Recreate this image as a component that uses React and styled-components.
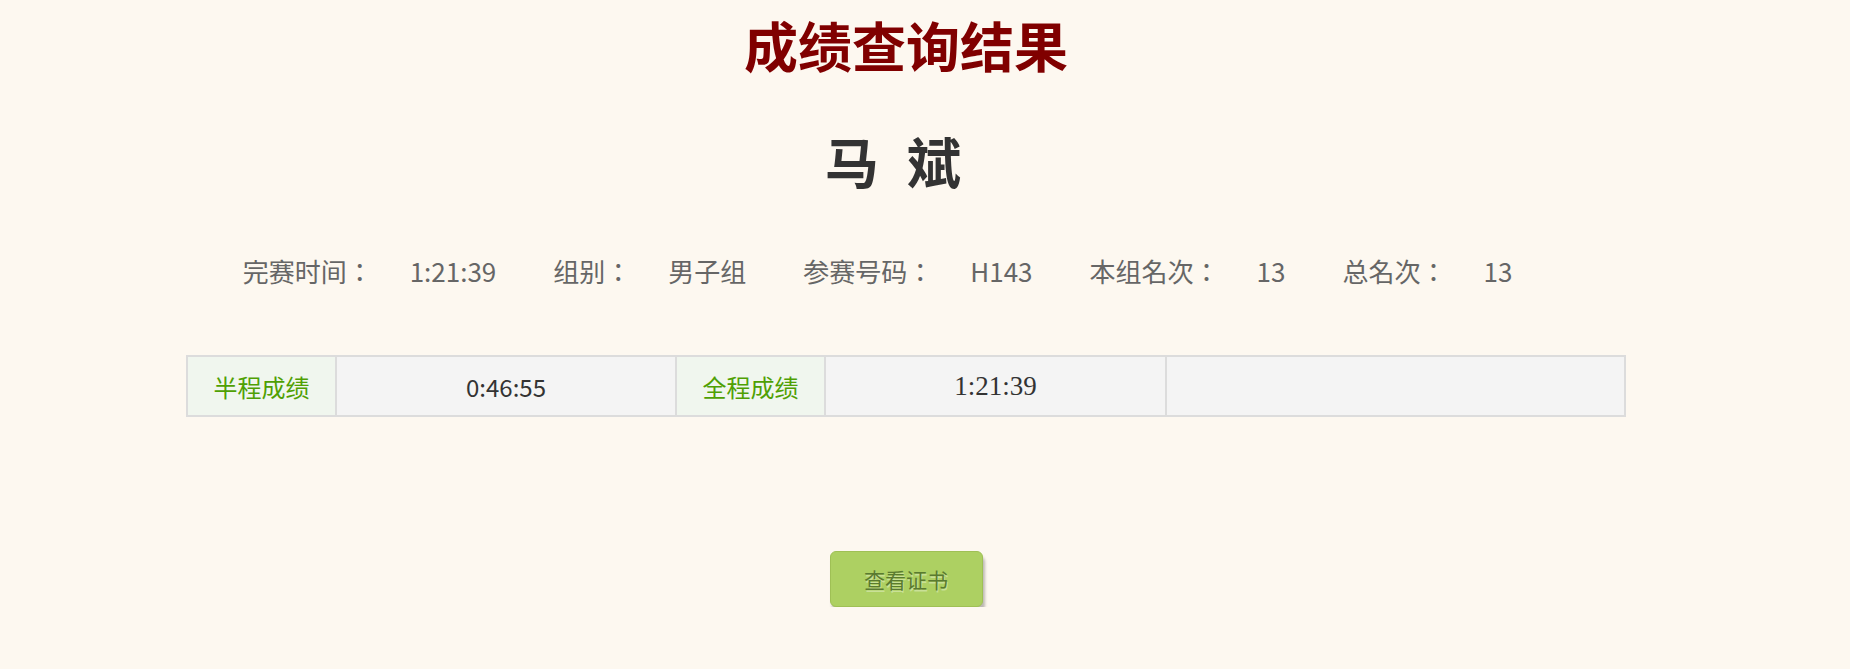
import React from 'react';
import styled, { createGlobalStyle } from 'styled-components';

const GlobalStyle = createGlobalStyle`
	html, body {
		margin: 0;
		padding: 0;
		background: #fdf8f0;
		font-family: 'Noto Sans CJK SC', 'Noto Sans', sans-serif;
	}
`;

const info = [
	{ label: '完赛时间：', value: '1:21:39' },
	{ label: '组别：', value: '男子组' },
	{ label: '参赛号码：', value: 'H143' },
	{ label: '本组名次：', value: '13' },
	{ label: '总名次：', value: '13' },
];

const App = () => {
	return (
		<Page>
			<GlobalStyle />
			<Title>成绩查询结果</Title>
			<Name>马 斌</Name>
			<InfoRow>
				{info.map((item) => (
					<InfoItem key={item.label}>
						<InfoLabel>{item.label}</InfoLabel>
						<InfoValue>{item.value}</InfoValue>
					</InfoItem>
				))}
			</InfoRow>
			<ScoreTable>
				<Cell $label>半程成绩</Cell>
				<Cell>0:46:55</Cell>
				<Cell $label>全程成绩</Cell>
				<Cell $serif>1:21:39</Cell>
				<Cell />
			</ScoreTable>
			<ButtonRow>
				<CertButton type='button'>查看证书</CertButton>
			</ButtonRow>
		</Page>
	);
};
export default App;

const Page = styled.div`
	width: 1440px;
	margin-left: 186px;
	display: flex;
	flex-direction: column;
	align-items: stretch;
`;

const Title = styled.h1`
	margin: 0;
	height: 90px;
	line-height: 90px;
	text-align: center;
	font-size: 54px;
	font-weight: 700;
	color: #800000;
`;

const Name = styled.h2`
	margin: 31px 0 0;
	height: 80px;
	line-height: 80px;
	padding-right: 18px;
	letter-spacing: 8px;
	text-align: center;
	font-size: 54px;
	font-weight: 700;
	color: #333333;
	white-space: pre;
`;

const InfoRow = styled.div`
	margin-top: 50px;
	height: 40px;
	line-height: 40px;
	display: flex;
	justify-content: center;
	font-family: 'Noto Sans CJK JP', 'Noto Sans CJK SC', sans-serif;
	font-size: 26px;
	color: #666666;
`;

const InfoItem = styled.div`
	display: flex;
	margin-right: 57px;
`;

const InfoLabel = styled.span`
	margin-right: 37px;
`;

const InfoValue = styled.span``;

const ScoreTable = styled.div`
	margin-top: 64px;
	display: grid;
	grid-template-columns: 147px 340px 149px 341px 1fr;
	height: 62px;
	box-sizing: border-box;
	border: 2px solid #dcdcdc;
`;

const Cell = styled.div`
	display: flex;
	align-items: center;
	justify-content: center;
	font-size: ${(p) => (p.$serif ? '27px' : '24px')};
	font-family: ${(p) =>
		p.$serif
			? "'Liberation Serif', 'Noto Sans CJK SC', serif"
			: "'Noto Sans CJK SC', 'Noto Sans', sans-serif"};
	color: ${(p) => (p.$label ? '#4fa003' : '#333333')};
	background: ${(p) => (p.$label ? '#f0f6ee' : '#f4f4f4')};
	& + & {
		border-left: 2px solid #dcdcdc;
	}
`;

const ButtonRow = styled.div`
	margin-top: 134px;
	display: flex;
	justify-content: center;
`;

const CertButton = styled.button`
	width: 153px;
	height: 56px;
	border: 1px solid #9fc055;
	border-radius: 6px;
	background: #add062;
	color: #5a7a30;
	font-family: 'Noto Sans CJK SC', 'Noto Sans', sans-serif;
	font-size: 21px;
	text-shadow: 1px 2px 0 rgba(255, 255, 255, 0.35);
	box-shadow: 2px 5px 3px rgba(0, 0, 0, 0.26);
	cursor: pointer;
`;
